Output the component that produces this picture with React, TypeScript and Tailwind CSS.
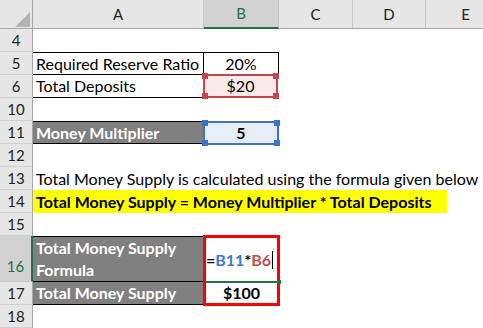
import React from 'react';

type RowProps = {
  n: string;
  h: string;
  active?: boolean;
  children?: React.ReactNode;
};

// row header + cells
const Row: React.FC<RowProps> = ({ n, h, active, children }) => (
  <div className={`flex ${h}`}>
    <div
      className={
        active
          ? 'w-[33px] shrink-0 flex items-end justify-center pb-[4px] text-[15px] bg-[#d2d2d2] text-[#217346] border-b border-[#c8c8c8] border-r-2 border-r-[#217346]'
          : 'w-[33px] shrink-0 flex items-center justify-center text-[15px] bg-[#e6e6e6] text-[#222] border-b border-[#d0d0d0] border-r border-r-[#a8a8a8]'
      }
    >
      {n}
    </div>
    {children}
  </div>
);

const Handles: React.FC<{ color: string }> = ({ color }) => (
  <>
    <span className={`absolute -left-[3px] -top-[3px] w-[6px] h-[6px] ${color}`} />
    <span className={`absolute -right-[3px] -top-[3px] w-[6px] h-[6px] ${color}`} />
    <span className={`absolute -left-[3px] -bottom-[3px] w-[6px] h-[6px] ${color}`} />
    <span className={`absolute -right-[3px] -bottom-[3px] w-[6px] h-[6px] ${color}`} />
  </>
);

const App: React.FC = () => {
  const cols = [
    { l: 'A', w: 'w-[171px]' },
    { l: 'B', w: 'w-[75px]', sel: true },
    { l: 'C', w: 'w-[74px]' },
    { l: 'D', w: 'w-[73px]' },
    { l: 'E', w: 'w-[80px]' },
  ];

  return (
    <div className="w-[483px] h-[328px] overflow-hidden bg-white text-[16px] text-black [font-family:Lato,'Open_Sans',sans-serif]">
      {/* column headers */}
      <div className="flex h-[29px] text-[15px]">
        <div className="w-[33px] shrink-0 bg-[#e6e6e6] border-r border-b border-[#a8a8a8] relative">
          <svg className="absolute left-[15px] top-[12px]" width="15" height="15" viewBox="0 0 15 15">
            <polygon points="15,0 15,15 0,15" fill="#b5b5b5" />
          </svg>
        </div>
        {cols.map(c => (
          <div
            key={c.l}
            className={
              c.sel
                ? `${c.w} shrink-0 flex items-center justify-center bg-[#d2d2d2] text-[#217346] border-r border-[#bdbdbd] border-b-2 border-b-[#217346]`
                : `${c.w} shrink-0 flex items-center justify-center bg-[#e6e6e6] text-[#222] border-r border-[#c6c6c6] border-b border-b-[#a8a8a8]`
            }
          >
            {c.l}
          </div>
        ))}
      </div>

      <Row n="4" h="h-[23px]" />

      <Row n="5" h="h-[23px]">
        <div className="w-[171px] shrink-0 flex items-center px-[3px] border-t border-b border-r border-black">Required Reserve Ratio</div>
        <div className="w-[75px] shrink-0 flex items-center justify-center border-t border-b border-r border-black">20%</div>
      </Row>

      <Row n="6" h="h-[23px]">
        <div className="w-[171px] shrink-0 flex items-center px-[3px] border-b border-r border-black">Total Deposits</div>
        <div className="w-[75px] shrink-0 relative -ml-[1px] -mt-[1px] h-[24px] flex items-center justify-center bg-[#fbeaea] border-2 border-[#c9444b]">
          $20
          <Handles color="bg-[#c9444b]" />
        </div>
      </Row>

      <Row n="10" h="h-[23px]" />

      <Row n="11" h="h-[23px]">
        <div className="w-[171px] shrink-0 flex items-center px-[3px] bg-[#808080] text-white font-bold border-y border-r border-black">Money Multiplier</div>
        <div className="w-[76px] shrink-0 relative -ml-[1px] h-[24px] flex items-center justify-center font-bold bg-[#e8eef9] border-2 border-[#3d73cc]">
          5
          <Handles color="bg-[#3d73cc]" />
        </div>
      </Row>

      <Row n="12" h="h-[23px]" />

      <Row n="13" h="h-[23px]">
        <div className="flex items-center px-[3px] whitespace-nowrap">Total Money Supply is calculated using the formula given below</div>
      </Row>

      <Row n="14" h="h-[23px]">
        <div className="w-[414px] shrink-0 flex items-center px-[3px] whitespace-nowrap bg-[#ffff00] font-bold">Total Money Supply = Money Multiplier * Total Deposits</div>
      </Row>

      <Row n="15" h="h-[23px]" />

      <Row n="16" h="h-[46px]" active>
        <div className="w-[171px] shrink-0 flex items-center px-[3px] bg-[#808080] text-white font-bold leading-[22px] border-t border-b border-r border-black">
          Total Money Supply<br />Formula
        </div>
        <div className="w-[77px] shrink-0 relative -ml-[1px] -mt-[1px] h-[47px] flex items-center font-bold border-t-[3px] border-x-[3px] border-[#ff0000]">
          <span>=</span>
          <span className="text-[#3c78d8]">B11</span>
          <span>*</span>
          <span className="text-[#c5504b]">B6</span>
          <span className="w-px h-[18px] bg-black ml-[1px]" />
          <span className="absolute left-0 right-0 -bottom-[1px] h-[2px] bg-[#217346]" />
          <span className="absolute -right-[4px] -bottom-[2px] w-[4px] h-[4px] bg-[#217346]" />
        </div>
      </Row>

      <Row n="17" h="h-[23px]">
        <div className="w-[171px] shrink-0 flex items-center px-[3px] bg-[#808080] text-white font-bold border-b border-r border-black">Total Money Supply</div>
        <div className="w-[77px] shrink-0 -ml-[1px] h-[24px] flex items-center justify-center font-bold border-b-[3px] border-x-[3px] border-[#ff0000]">$100</div>
      </Row>

      <Row n="18" h="h-[23px]" />
    </div>
  );
};

export default App;
